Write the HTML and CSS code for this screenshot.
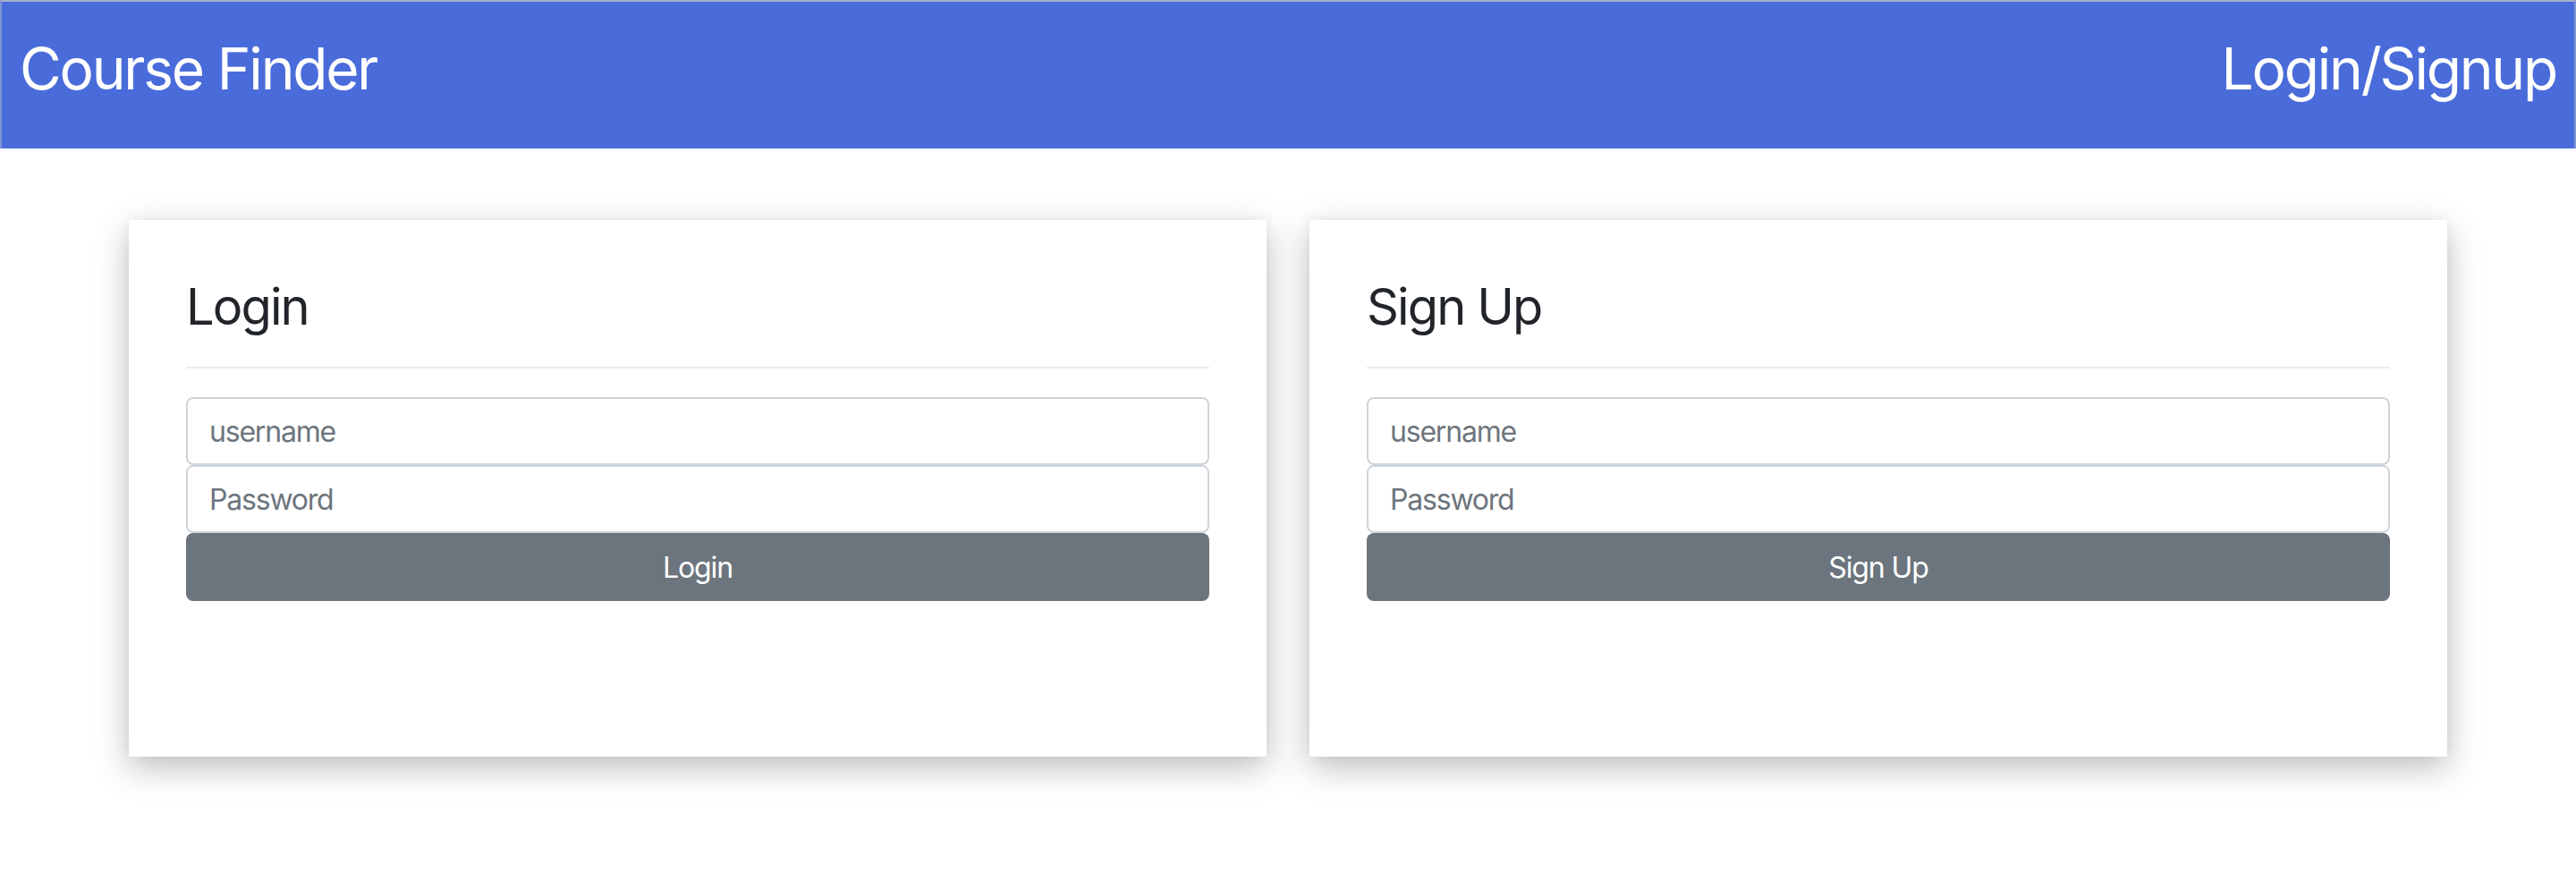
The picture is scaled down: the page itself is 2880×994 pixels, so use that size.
FILE: index.html
```html
<!DOCTYPE html>
<html lang="en">
<head>
<meta charset="utf-8">
<title>Course Finder</title>
<link rel="stylesheet" href="styles.css">
</head>
<body>
<header class="navbar">
  <div class="brand">Course Finder</div>
  <div class="nav-link">Login/Signup</div>
</header>
<main class="panels">
  <section class="card">
    <h3 class="card-title">Login</h3>
    <hr class="divider">
    <form class="form">
      <input class="field" type="text" placeholder="username">
      <input class="field" type="password" placeholder="Password">
      <button class="btn" type="button">Login</button>
    </form>
  </section>
  <section class="card">
    <h3 class="card-title">Sign Up</h3>
    <hr class="divider">
    <form class="form">
      <input class="field" type="text" placeholder="username">
      <input class="field" type="password" placeholder="Password">
      <button class="btn" type="button">Sign Up</button>
    </form>
  </section>
</main>
</body>
</html>
```
FILE: styles.css
```css
* { box-sizing: border-box; }
html, body {
  margin: 0;
  padding: 0;
  background: #ffffff;
  font-family: Inter, "Noto Sans", "Liberation Sans", sans-serif;
  color: #212529;
}
.navbar {
  height: 166px;
  background: #4a6cda;
  border-top: 2px solid #a7afc6;
  border-left: 2px solid #7d91d6;
  border-right: 2px solid #7d91d6;
  display: flex;
  justify-content: space-between;
  align-items: center;
  padding: 0 20px 0 20px;
  color: #ffffff;
  font-size: 64px;
  line-height: 1;
  letter-spacing: -2.2px;
}
.brand, .nav-link {
  padding-bottom: 14px;
}
.panels {
  display: grid;
  grid-template-columns: 1272px 1272px;
  column-gap: 48px;
  padding: 80px 0 60px 144px;
}
.card {
  height: 600px;
  background: #ffffff;
  padding: 64px 64px 0 64px;
  box-shadow: 0 12px 36px rgba(0, 0, 0, 0.26), 0 0 12px rgba(0, 0, 0, 0.04);
}
.card-title {
  margin: 0;
  font-size: 56px;
  font-weight: 400;
  line-height: 67px;
  letter-spacing: -1.9px;
  color: #212529;
}
.divider {
  margin: 33px 0 32px;
  border: 0;
  border-top: 2px solid #ececec;
  height: 0;
}
.form {
  display: flex;
  flex-direction: column;
}
.field {
  height: 76px;
  width: 100%;
  border: 2px solid #ced4da;
  border-radius: 8px;
  padding: 0 24px;
  font-family: inherit;
  font-size: 32px;
  letter-spacing: -1.2px;
  color: #495057;
  background: #ffffff;
  outline: none;
}
.field::placeholder {
  color: #6c757d;
}
.btn {
  height: 76px;
  width: 100%;
  border: 0;
  border-radius: 8px;
  background: #6c757d;
  color: #ffffff;
  font-family: inherit;
  font-size: 32px;
  letter-spacing: -1.1px;
  padding: 0;
}
```
